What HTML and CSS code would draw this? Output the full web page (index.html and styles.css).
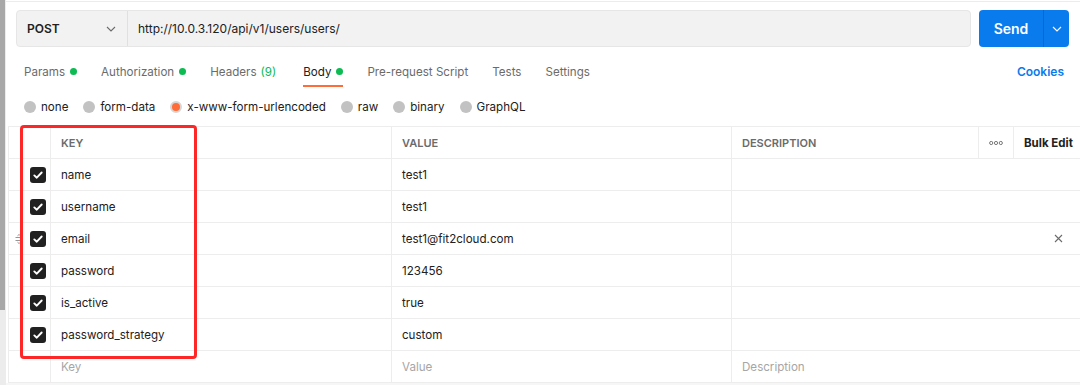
FILE: index.html
```html
<!DOCTYPE html>
<html lang="en">
<head>
    <meta charset="UTF-8">
    <title>POST users - Postman</title>
    <link rel="stylesheet" href="styles.css">
</head>
<body>
    <div class="page">
        <div class="scrollbar"><div class="scroll-thumb"></div></div>

        <div class="main">
            <div class="top-line"></div>

            <!-- request url bar -->
            <div class="request-bar">
                <div class="url-group">
                    <div class="method">
                        <span>POST</span>
                        <svg class="chevron" width="10" height="6" viewBox="0 0 10 6"><path d="M1 1l4 4 4-4" fill="none" stroke="#6b6b6b" stroke-width="1.1"/></svg>
                    </div>
                    <div class="url">http://10.0.3.120/api/v1/users/users/</div>
                </div>
                <div class="send">
                    <span class="send-label">Send</span>
                    <span class="send-more">
                        <svg width="10" height="6" viewBox="0 0 10 6"><path d="M1 1l4 4 4-4" fill="none" stroke="#ffffff" stroke-width="1.1"/></svg>
                    </span>
                </div>
            </div>

            <!-- request tabs -->
            <div class="tabs">
                <div class="tab">Params<span class="dot"></span></div>
                <div class="tab">Authorization<span class="dot"></span></div>
                <div class="tab headers">Headers <span class="count">(9)</span></div>
                <div class="tab active">Body<span class="dot"></span></div>
                <div class="tab">Pre-request Script</div>
                <div class="tab">Tests</div>
                <div class="tab">Settings</div>
                <div class="cookies">Cookies</div>
            </div>

            <!-- body type -->
            <div class="body-types">
                <label class="radio"><span class="circle"></span>none</label>
                <label class="radio"><span class="circle"></span>form-data</label>
                <label class="radio"><span class="circle checked"></span>x-www-form-urlencoded</label>
                <label class="radio"><span class="circle"></span>raw</label>
                <label class="radio"><span class="circle"></span>binary</label>
                <label class="radio"><span class="circle"></span>GraphQL</label>
            </div>

            <!-- key / value table -->
            <div class="kv-table">
                <div class="kv-row kv-head">
                    <div class="cell"></div>
                    <div class="cell">KEY</div>
                    <div class="cell">VALUE</div>
                    <div class="cell">DESCRIPTION</div>
                    <div class="cell more">
                        <svg width="14" height="6" viewBox="0 0 14 6"><circle cx="2.2" cy="3" r="1.6" fill="none" stroke="#6b6b6b" stroke-width="0.9"/><circle cx="7" cy="3" r="1.6" fill="none" stroke="#6b6b6b" stroke-width="0.9"/><circle cx="11.8" cy="3" r="1.6" fill="none" stroke="#6b6b6b" stroke-width="0.9"/></svg>
                    </div>
                    <div class="cell bulk">Bulk Edit</div>
                </div>

                <div class="kv-row">
                    <div class="cell check"><svg class="checkbox" width="16" height="16" viewBox="0 0 16 16"><rect width="16" height="16" rx="3" fill="#212121"/><path d="M4.3 8.4l2.5 2.3 4.9-5.2" fill="none" stroke="#fff" stroke-width="1.9" stroke-linecap="round" stroke-linejoin="round"/></svg></div>
                    <div class="cell">name</div>
                    <div class="cell">test1</div>
                    <div class="cell desc"></div>
                </div>
                <div class="kv-row">
                    <div class="cell check"><svg class="checkbox" width="16" height="16" viewBox="0 0 16 16"><rect width="16" height="16" rx="3" fill="#212121"/><path d="M4.3 8.4l2.5 2.3 4.9-5.2" fill="none" stroke="#fff" stroke-width="1.9" stroke-linecap="round" stroke-linejoin="round"/></svg></div>
                    <div class="cell">username</div>
                    <div class="cell">test1</div>
                    <div class="cell desc"></div>
                </div>
                <div class="kv-row hovered">
                    <div class="cell check">
                        <svg class="drag" width="8" height="10" viewBox="0 0 8 10"><path d="M0.5 3.5h7M0.5 6.5h7M2.5 1.8l1.5-1.3 1.5 1.3M2.5 8.2l1.5 1.3 1.5-1.3" fill="none" stroke="#8a8a8a" stroke-width="0.9"/></svg>
                        <svg class="checkbox" width="16" height="16" viewBox="0 0 16 16"><rect width="16" height="16" rx="3" fill="#212121"/><path d="M4.3 8.4l2.5 2.3 4.9-5.2" fill="none" stroke="#fff" stroke-width="1.9" stroke-linecap="round" stroke-linejoin="round"/></svg>
                    </div>
                    <div class="cell">email</div>
                    <div class="cell">test1@fit2cloud.com</div>
                    <div class="cell desc">
                        <svg class="remove" width="9" height="9" viewBox="0 0 9 9"><path d="M1 1l7 7M8 1l-7 7" stroke="#6b6b6b" stroke-width="1.1"/></svg>
                    </div>
                </div>
                <div class="kv-row">
                    <div class="cell check"><svg class="checkbox" width="16" height="16" viewBox="0 0 16 16"><rect width="16" height="16" rx="3" fill="#212121"/><path d="M4.3 8.4l2.5 2.3 4.9-5.2" fill="none" stroke="#fff" stroke-width="1.9" stroke-linecap="round" stroke-linejoin="round"/></svg></div>
                    <div class="cell">password</div>
                    <div class="cell">123456</div>
                    <div class="cell desc"></div>
                </div>
                <div class="kv-row">
                    <div class="cell check"><svg class="checkbox" width="16" height="16" viewBox="0 0 16 16"><rect width="16" height="16" rx="3" fill="#212121"/><path d="M4.3 8.4l2.5 2.3 4.9-5.2" fill="none" stroke="#fff" stroke-width="1.9" stroke-linecap="round" stroke-linejoin="round"/></svg></div>
                    <div class="cell">is_active</div>
                    <div class="cell">true</div>
                    <div class="cell desc"></div>
                </div>
                <div class="kv-row">
                    <div class="cell check"><svg class="checkbox" width="16" height="16" viewBox="0 0 16 16"><rect width="16" height="16" rx="3" fill="#212121"/><path d="M4.3 8.4l2.5 2.3 4.9-5.2" fill="none" stroke="#fff" stroke-width="1.9" stroke-linecap="round" stroke-linejoin="round"/></svg></div>
                    <div class="cell">password_strategy</div>
                    <div class="cell">custom</div>
                    <div class="cell desc"></div>
                </div>
                <div class="kv-row placeholder">
                    <div class="cell check"></div>
                    <div class="cell">Key</div>
                    <div class="cell">Value</div>
                    <div class="cell desc">Description</div>
                </div>

                <!-- annotation box drawn over the table -->
                <div class="highlight"></div>
            </div>
            <div class="below"></div>
        </div>
    </div>
</body>
</html>
```

FILE: styles.css
```css
body {
    margin: 0;
    font-family: Inter, 'Noto Sans', sans-serif;
    font-size: 11.6px;
    color: #212121;
    background: #ffffff;
    width: 1080px;
    height: 385px;
    overflow: hidden;
}

.page {
    display: flex;
    height: 385px;
}

.scrollbar {
    width: 6px;
    flex-shrink: 0;
    background: #ececec;
}

.scroll-thumb {
    width: 5px;
    height: 310px;
    background: #a8a8a8;
}

.main {
    flex: 1;
    display: flex;
    flex-direction: column;
    min-width: 0;
}

.top-line {
    height: 1px;
    margin-top: 1px;
    background: #ececec;
}

/* request bar */

.request-bar {
    display: flex;
    gap: 8px;
    margin-top: 8px;
    padding: 0 11px 0 10px;
    height: 37px;
}

.url-group {
    flex: 1;
    display: flex;
    background: #f2f2f2;
    border: 1px solid #e6e6e6;
    border-radius: 4px;
}

.method {
    width: 111px;
    box-sizing: border-box;
    display: flex;
    align-items: center;
    justify-content: space-between;
    padding: 0 11px 0 10px;
    border-right: 1px solid #e0e0e0;
    font-weight: 600;
    font-size: 12px;
}

.url {
    display: flex;
    align-items: center;
    padding-left: 10px;
    font-size: 12px;
    color: #212121;
}

.send {
    width: 90px;
    display: flex;
    background: #097bed;
    border-radius: 4px;
    color: #ffffff;
}

.send-label {
    flex: 1;
    display: flex;
    align-items: center;
    justify-content: center;
    font-weight: 600;
    font-size: 14px;
    border-right: 1px solid #0669cf;
}

.send-more {
    width: 25px;
    display: flex;
    align-items: center;
    justify-content: center;
}

/* tabs */

.tabs {
    display: flex;
    gap: 24px;
    margin-top: 10px;
    padding: 0 16px 0 18px;
    height: 30px;
}

.tab {
    display: flex;
    align-items: center;
    height: 27px;
    padding-top: 1px;
    border-bottom: 2px solid transparent;
    color: #6b6b6b;
    white-space: nowrap;
}

.tab.headers {
    margin-right: 3px;
}

.tab.active {
    color: #212121;
    border-bottom-color: #ff6c37;
}

.dot {
    width: 7px;
    height: 7px;
    border-radius: 50%;
    background: #0cbb52;
    margin-left: 5px;
}

.count {
    color: #0cbb52;
    margin-left: 4px;
}

.cookies {
    margin-left: auto;
    display: flex;
    align-items: center;
    height: 28px;
    color: #097bed;
    font-weight: 600;
    font-size: 12px;
}

/* body type radios */

.body-types {
    display: flex;
    align-items: center;
    gap: 15px;
    height: 39px;
    padding-left: 18px;
}

.radio {
    display: flex;
    align-items: center;
    gap: 5px;
}

.circle {
    width: 12px;
    height: 12px;
    border-radius: 50%;
    background: #c2c2c2;
    box-sizing: border-box;
}

.circle.checked {
    background: #ff6c37;
    border: 2px solid #d6d6d6;
}

/* key value table */

.kv-table {
    position: relative;
    margin-left: 2px;
    border-top: 1px solid #ededed;
    border-left: 1px solid #ededed;
}

.kv-row {
    display: grid;
    grid-template-columns: 42px 341px 340px 247px 35px 1fr;
    height: 32px;
    border-bottom: 1px solid #ededed;
    box-sizing: border-box;
}

.cell {
    display: flex;
    align-items: center;
    padding-left: 10px;
    border-right: 1px solid #ededed;
    white-space: nowrap;
    min-width: 0;
}

.kv-head .cell {
    font-size: 11px;
    font-weight: 600;
    color: #6b6b6b;
}

.kv-head .cell:last-child {
    border-right: none;
}

.kv-head .more {
    justify-content: center;
    padding-left: 0;
}

.kv-head .bulk {
    color: #212121;
    font-size: 11.5px;
    font-weight: 700;
}

.cell.check {
    justify-content: flex-end;
    padding: 0 4px 0 0;
    border-right: 1px solid #ededed;
    position: relative;
}

.drag {
    position: absolute;
    left: 6px;
    top: 11px;
}

.cell.desc {
    grid-column: span 3;
    border-right: none;
    justify-content: space-between;
    padding-right: 17px;
}

.remove {
    margin-left: auto;
}

.placeholder .cell {
    color: #a6a6a6;
}

.highlight {
    position: absolute;
    left: 11px;
    top: -2px;
    width: 177px;
    height: 234px;
    box-sizing: border-box;
    border: 3px solid #fe2727;
    border-radius: 4px;
    pointer-events: none;
}

.below {
    flex: 1;
    background: #f6f6f6;
}
```
